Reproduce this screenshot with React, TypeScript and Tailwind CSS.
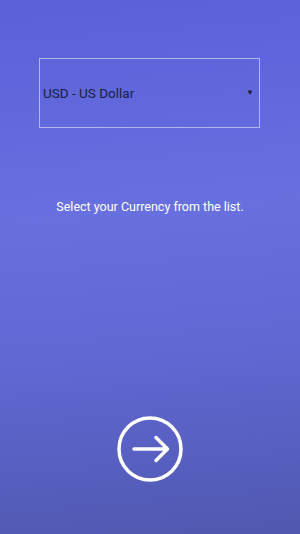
export default function App() {
  return (
    <div
      className="flex h-[534px] w-[300px] flex-col items-center bg-[linear-gradient(175deg,#5a60d8_0%,#6870e0_40%,#6068d4_65%,#5058b0_100%)] pt-[58px]"
      style={{ fontFamily: "Roboto, 'Noto Sans', sans-serif" }}
    >
      <div className="ml-[39px] flex h-[70px] w-[221px] items-center justify-between self-start border border-[#b4b8e8] pl-[3px] pr-[5px]">
        <span className="text-[13.5px] text-[#1c1d3e]">USD - US Dollar</span>
        <span className="text-[8px] text-[#1c1d3e]">▼</span>
      </div>
      <p className="mt-[70px] text-[12.5px] text-white">Select your Currency from the list.</p>
      <div className="mt-auto mb-[51px]">
        <svg width="68" height="68" viewBox="0 0 68 68" fill="none" stroke="white" strokeLinecap="round" strokeLinejoin="round">
          <circle cx="34" cy="34" r="31" strokeWidth="3.5" />
          <path d="M18 34h33M40 22.5 51.5 34 40 45.5" strokeWidth="3.5" />
        </svg>
      </div>
    </div>
  );
}
